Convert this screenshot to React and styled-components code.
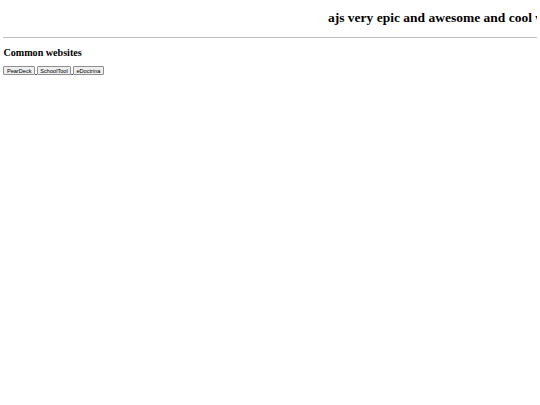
import React from "react";
import styled, { createGlobalStyle } from "styled-components";

const Global = createGlobalStyle`
  html, body { background: #ffffff; }
  body {
    margin: 3.375px;
    font-family: "Liberation Serif", "Times New Roman", serif;
    font-size: 6.75px;
    color: #000;
  }
`;

const Title = styled.h1`
  font-size: 13.5px;
  font-weight: bold;
  margin: 6.8px 0 11.3px;
  overflow: hidden;
  white-space: nowrap;
`;

const Scroller = styled.div`
  padding-left: 324.6px;
`;

const Rule = styled.hr`
  margin: 3.375px 0;
  height: 0;
  border: none;
  border-top: 1px solid #bdbdbd;
`;

const Section = styled.h2`
  font-size: 10.125px;
  font-weight: bold;
  margin: 8.4px 0;
`;

const Links = styled.div`
  line-height: normal;
`;

const LinkWrap = styled.a`
  color: #551a8b;
  text-decoration: underline;
`;

const Btn = styled.button`
  font-family: "Liberation Sans", Arial, sans-serif;
  font-size: 5.62px;
  line-height: normal;
  padding: 0.42px 2.53px;
  margin: 0;
  background: #efefef;
  color: #000;
  border: 1px solid #8f8f8f;
  border-radius: 1px;
  cursor: pointer;
`;

const sites = ["PearDeck", "SchoolTool", "eDoctrina"];

export default function App() {
  return (
    <>
      <Global />
      <Title>
        <Scroller>ajs very epic and awesome and cool website</Scroller>
      </Title>
      <Rule />
      <Section>Common websites</Section>
      <Links>
        {sites.map((s, i) => (
          <React.Fragment key={s}>
            <LinkWrap href="#">
              <Btn>{s}</Btn>
              {i < sites.length - 1 ? " " : null}
            </LinkWrap>
          </React.Fragment>
        ))}
      </Links>
    </>
  );
}
